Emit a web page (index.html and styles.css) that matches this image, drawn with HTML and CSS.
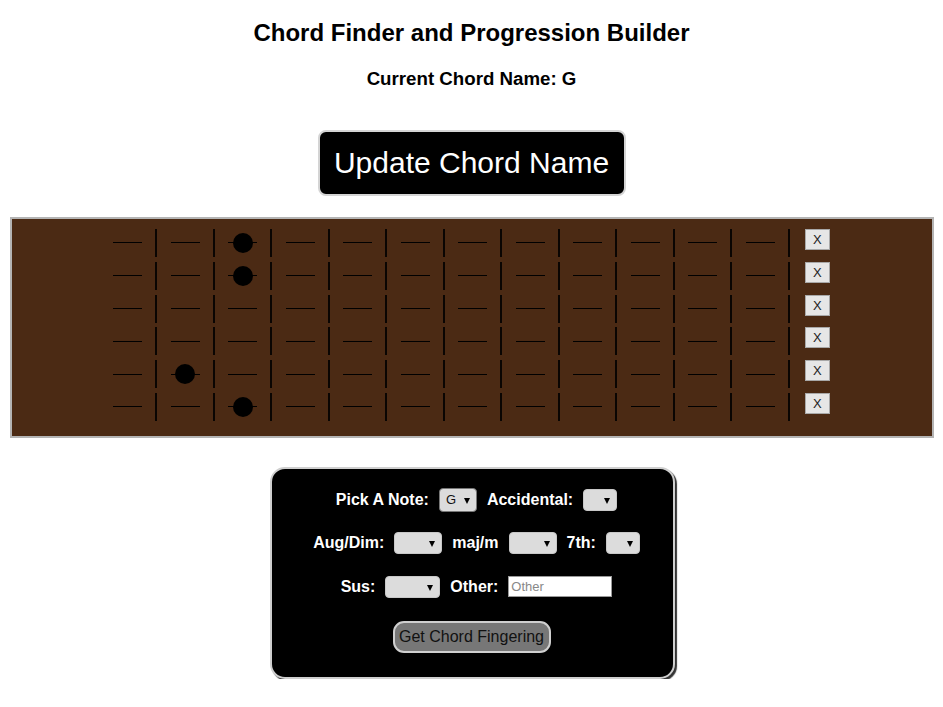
FILE: index.html
```html
<!DOCTYPE html>
<html>
<head>
<meta charset="utf-8">
<link rel="stylesheet" href="styles.css">
</head>
<body>
<h1 class="title">Chord Finder and Progression Builder</h1>
<h3 class="current">Current Chord Name: G</h3>
<div class="update-wrap"><button class="update-btn">Update Chord Name</button></div>

<div class="fretboard">
  <div class="string">
    <div class="fret"><span class="wire"></span></div>
    <div class="fret"><span class="wire"></span></div>
    <div class="fret"><span class="wire"></span><span class="dot"></span></div>
    <div class="fret"><span class="wire"></span></div>
    <div class="fret"><span class="wire"></span></div>
    <div class="fret"><span class="wire"></span></div>
    <div class="fret"><span class="wire"></span></div>
    <div class="fret"><span class="wire"></span></div>
    <div class="fret"><span class="wire"></span></div>
    <div class="fret"><span class="wire"></span></div>
    <div class="fret"><span class="wire"></span></div>
    <div class="fret"><span class="wire"></span></div>
    <button class="mute">X</button>
  </div>
  <div class="string">
    <div class="fret"><span class="wire"></span></div>
    <div class="fret"><span class="wire"></span></div>
    <div class="fret"><span class="wire"></span><span class="dot"></span></div>
    <div class="fret"><span class="wire"></span></div>
    <div class="fret"><span class="wire"></span></div>
    <div class="fret"><span class="wire"></span></div>
    <div class="fret"><span class="wire"></span></div>
    <div class="fret"><span class="wire"></span></div>
    <div class="fret"><span class="wire"></span></div>
    <div class="fret"><span class="wire"></span></div>
    <div class="fret"><span class="wire"></span></div>
    <div class="fret"><span class="wire"></span></div>
    <button class="mute">X</button>
  </div>
  <div class="string">
    <div class="fret"><span class="wire"></span></div>
    <div class="fret"><span class="wire"></span></div>
    <div class="fret"><span class="wire"></span></div>
    <div class="fret"><span class="wire"></span></div>
    <div class="fret"><span class="wire"></span></div>
    <div class="fret"><span class="wire"></span></div>
    <div class="fret"><span class="wire"></span></div>
    <div class="fret"><span class="wire"></span></div>
    <div class="fret"><span class="wire"></span></div>
    <div class="fret"><span class="wire"></span></div>
    <div class="fret"><span class="wire"></span></div>
    <div class="fret"><span class="wire"></span></div>
    <button class="mute">X</button>
  </div>
  <div class="string">
    <div class="fret"><span class="wire"></span></div>
    <div class="fret"><span class="wire"></span></div>
    <div class="fret"><span class="wire"></span></div>
    <div class="fret"><span class="wire"></span></div>
    <div class="fret"><span class="wire"></span></div>
    <div class="fret"><span class="wire"></span></div>
    <div class="fret"><span class="wire"></span></div>
    <div class="fret"><span class="wire"></span></div>
    <div class="fret"><span class="wire"></span></div>
    <div class="fret"><span class="wire"></span></div>
    <div class="fret"><span class="wire"></span></div>
    <div class="fret"><span class="wire"></span></div>
    <button class="mute">X</button>
  </div>
  <div class="string">
    <div class="fret"><span class="wire"></span></div>
    <div class="fret"><span class="wire"></span><span class="dot"></span></div>
    <div class="fret"><span class="wire"></span></div>
    <div class="fret"><span class="wire"></span></div>
    <div class="fret"><span class="wire"></span></div>
    <div class="fret"><span class="wire"></span></div>
    <div class="fret"><span class="wire"></span></div>
    <div class="fret"><span class="wire"></span></div>
    <div class="fret"><span class="wire"></span></div>
    <div class="fret"><span class="wire"></span></div>
    <div class="fret"><span class="wire"></span></div>
    <div class="fret"><span class="wire"></span></div>
    <button class="mute">X</button>
  </div>
  <div class="string">
    <div class="fret"><span class="wire"></span></div>
    <div class="fret"><span class="wire"></span></div>
    <div class="fret"><span class="wire"></span><span class="dot"></span></div>
    <div class="fret"><span class="wire"></span></div>
    <div class="fret"><span class="wire"></span></div>
    <div class="fret"><span class="wire"></span></div>
    <div class="fret"><span class="wire"></span></div>
    <div class="fret"><span class="wire"></span></div>
    <div class="fret"><span class="wire"></span></div>
    <div class="fret"><span class="wire"></span></div>
    <div class="fret"><span class="wire"></span></div>
    <div class="fret"><span class="wire"></span></div>
    <button class="mute">X</button>
  </div>
</div>

<div class="panel-wrap">
  <div class="panel">
    <div class="prow">
      <label class="plabel">Pick A Note:</label>
      <span class="sel sel-note"><select class="selbox"><option>G</option></select></span>
      <label class="plabel">Accidental:</label>
      <span class="sel sel-s"><select class="selbox"><option></option></select></span>
    </div>
    <div class="prow">
      <label class="plabel">Aug/Dim:</label>
      <span class="sel sel-m"><select class="selbox"><option></option></select></span>
      <label class="plabel">maj/m</label>
      <span class="sel sel-m"><select class="selbox"><option></option></select></span>
      <label class="plabel">7th:</label>
      <span class="sel sel-s"><select class="selbox"><option></option></select></span>
    </div>
    <div class="prow">
      <label class="plabel">Sus:</label>
      <span class="sel sel-l"><select class="selbox"><option></option></select></span>
      <label class="plabel">Other:</label>
      <input class="other" type="text" placeholder="Other">
    </div>
    <div class="brow">
      <button class="finger-btn">Get Chord Fingering</button>
    </div>
  </div>
</div>
</body>
</html>
```
FILE: styles.css
```css
* { box-sizing: border-box; }
html, body { margin: 0; padding: 0; background: #fff; }
body { font-family: "Liberation Sans", Arial, sans-serif; color: #000; }

.title {
  margin: 0;
  padding-top: 19px;
  height: 62px;
  font-size: 24px;
  line-height: 28px;
  text-align: center;
  font-weight: bold;
}
.current {
  margin: 0;
  height: 68px;
  font-size: 18.7px;
  line-height: 33px;
  text-align: center;
  font-weight: bold;
}
.update-wrap {
  display: flex;
  justify-content: center;
  height: 87px;
}
.update-btn {
  width: 308px;
  height: 66px;
  background: #000;
  color: #fff;
  border: 2px solid #d4d4d4;
  border-radius: 8px;
  font-family: "Liberation Sans", Arial, sans-serif;
  font-size: 30px;
  padding: 0;
}

.fretboard {
  margin: 0 9px 0 10px;
  height: 221px;
  background: #4b2a14;
  border: 2px solid #b4b4b4;
  padding: 7.6px 0 0 87.75px;
  display: flex;
  flex-direction: column;
}
.string {
  display: flex;
  height: 32.8px;
  align-items: center;
}
.fret {
  position: relative;
  width: 57.5px;
  height: 28px;
  flex: none;
  display: flex;
  align-items: center;
  justify-content: center;
  border-right: 2px solid #0a0502;
}
.wire {
  display: block;
  width: 29px;
  height: 1px;
  background: #000;
}
.dot {
  position: absolute;
  left: 50%;
  top: 50%;
  width: 20px;
  height: 20px;
  margin: -10px 0 0 -10px;
  border-radius: 50%;
  background: #000;
}
.mute {
  align-self: flex-start;
  margin: 2.5px 0 0 15px;
  width: 25px;
  height: 21px;
  padding: 0;
  background: #e6e6e6;
  border: 1px solid #a8a8a8;
  border-radius: 0;
  font-family: "Liberation Sans", Arial, sans-serif;
  font-size: 13px;
  color: #222;
}

.panel-wrap {
  display: flex;
  justify-content: center;
  padding: 29px 0 0 2px;
}
.panel {
  width: 405px;
  height: 212px;
  background: #000;
  border: 2px solid #cfcfcf;
  border-radius: 15px;
  box-shadow: 2px 2px 1px #333;
  padding-top: 9px;
  display: flex;
  flex-direction: column;
  align-items: center;
}
.prow {
  display: flex;
  align-items: center;
  gap: 10px;
  height: 43.5px;
  padding-left: 8px;
}
.plabel {
  color: #fff;
  font-weight: bold;
  font-size: 16px;
}
.sel {
  position: relative;
  display: block;
  height: 22px;
  background: #dcdcdc;
  border: 1px solid #c8c8c8;
  border-radius: 4px;
}
.sel::after {
  content: "";
  position: absolute;
  right: 6px;
  top: 8px;
  border-left: 3.5px solid transparent;
  border-right: 3.5px solid transparent;
  border-top: 6px solid #000;
  pointer-events: none;
}
.selbox {
  appearance: none;
  -webkit-appearance: none;
  width: 100%;
  height: 100%;
  border: 0;
  background: transparent;
  font-family: "Liberation Sans", Arial, sans-serif;
  font-size: 13px;
  color: #111;
  padding: 0 0 0 6px;
  outline: none;
}
.sel-note { width: 38px; height: 24px; border: 1px solid #777; }
.sel-note::after { top: 9px; }
.sel-s { width: 34px; }
.sel-m { width: 48px; }
.sel-l { width: 55px; }
.other {
  width: 104px;
  height: 21px;
  border: 1px solid #999;
  background: #fff;
  font-family: "Liberation Sans", Arial, sans-serif;
  font-size: 13px;
  padding: 0 2px;
}
.other::placeholder { color: #888; }
.brow {
  display: flex;
  justify-content: center;
  padding-top: 12px;
  padding-right: 2px;
}
.finger-btn {
  width: 158px;
  height: 32px;
  background: #777;
  color: #111;
  border: 2px solid #cfcfcf;
  border-radius: 11px;
  font-family: "Liberation Sans", Arial, sans-serif;
  font-size: 16px;
  padding: 0;
}
```
